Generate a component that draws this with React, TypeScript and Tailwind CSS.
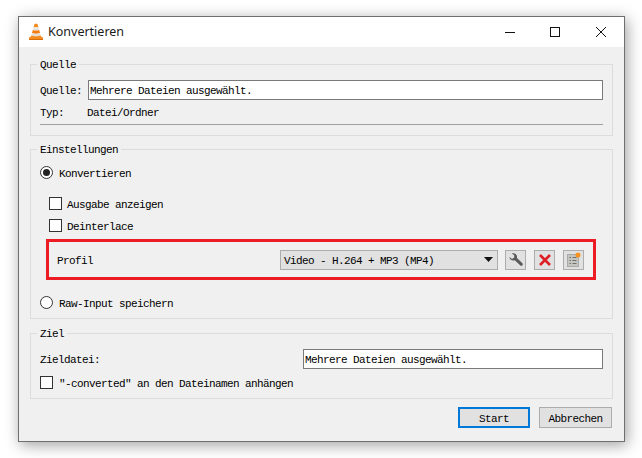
import React from 'react'

const mono = "font-['Liberation_Mono',monospace] text-[11px] leading-[12px] tracking-[-0.6px] text-black"

function VlcCone() {
  return (
    <svg width="16" height="18" viewBox="0 0 16 18" className="shrink-0">
      <path d="M6.4 1.2 C7.2 .6 8.8 .6 9.6 1.2 L10.4 4 L5.6 4 Z" fill="#f58a1f" />
      <path d="M5.5 4 L10.5 4 L11.2 7 C9.5 7.8 6.5 7.8 4.8 7 Z" fill="#e8e4de" />
      <path d="M4.8 7 C6.5 7.8 9.5 7.8 11.2 7 L12 10 C10 11 6 11 4 10 Z" fill="#f47c12" />
      <path d="M4 10 C6 11 10 11 12 10 L12.6 12.4 C10.5 13.4 5.5 13.4 3.4 12.4 Z" fill="#e4dfd8" />
      <path d="M3.4 12.4 C5.5 13.4 10.5 13.4 12.6 12.4 L13 13.6 L15 14.4 L15 17 L1 17 L1 14.4 L3 13.6 Z" fill="#f28a1c" />
      <path d="M1 16 L15 16 L15 17 L1 17 Z" fill="#d96c0a" />
    </svg>
  )
}

function Radio({ checked }: { checked?: boolean }) {
  return (
    <span className="w-[13px] h-[13px] rounded-full border border-[#333] bg-white flex items-center justify-center shrink-0">
      {checked && <span className="w-[7px] h-[7px] rounded-full bg-[#222]" />}
    </span>
  )
}

function Checkbox() {
  return <span className="w-[13px] h-[13px] border border-[#333] bg-white shrink-0" />
}

function IconButton({ children }: { children: React.ReactNode }) {
  return (
    <span className="w-[21px] h-[20px] border border-[#adadad] bg-[#e1e1e1] flex items-center justify-center">
      {children}
    </span>
  )
}

// the dialog font sits a pixel lower than Liberation Mono does
function Label({ className, children }: { className?: string; children: React.ReactNode }) {
  return <span className={`translate-y-px ${className ?? ''}`}>{children}</span>
}

function Group({ title, className, children }: { title: string; className?: string; children: React.ReactNode }) {
  return (
    <fieldset className={`border border-[#dcdcdc] pl-[9px] pr-[9px] ${className ?? ''}`}>
      <legend className="ml-[-3px] px-[3px] h-[12px] translate-y-px">{title}</legend>
      {children}
    </fieldset>
  )
}

export default function App() {
  return (
    <div className="w-[642px] h-[458px] bg-white pl-[18px] pt-[16px] overflow-hidden">
      <div className={`w-[607px] h-[426px] border border-[#6f6f6f] bg-[#f0f0f0] flex flex-col shadow-[2px_3px_14px_rgba(0,0,0,0.38)] ${mono}`}>
        {/* Title bar */}
        <div className="h-[30px] bg-white flex items-center pl-[9px] shrink-0">
          <VlcCone />
          <span className="ml-[4px] font-['Noto_Sans',sans-serif] text-[12.5px] tracking-normal text-[#1a1a1a]">Konvertieren</span>
          <div className="ml-auto flex items-center pr-[18px]">
            <svg width="10" height="10" viewBox="0 0 10 10" className="mr-[35px]"><path d="M0 5.5H10" stroke="#111" /></svg>
            <svg width="10" height="10" viewBox="0 0 10 10" className="mr-[36px]"><rect x=".5" y=".5" width="9" height="9" fill="none" stroke="#111" /></svg>
            <svg width="10" height="10" viewBox="0 0 10 10"><path d="M0 0L10 10M10 0L0 10" stroke="#111" /></svg>
          </div>
        </div>

        <div className="flex-1 px-[11px] pt-[11px] flex flex-col">
          <Group title="Quelle" className="w-[583px] pb-[10px]">
            <div className="flex items-center h-[20px] mt-[10px]">
              <Label className="w-[48px]">Quelle:</Label>
              <div className="w-[515px] h-[20px] bg-white border border-[#7a7a7a] px-[1px] flex items-center">
                <Label>Mehrere Dateien ausgewählt.</Label>
              </div>
            </div>
            <div className="flex mt-[6px]">
              <Label className="w-[47px]">Typ:</Label>
              <Label>Datei/Ordner</Label>
            </div>
            <div className="h-px bg-[#a0a0a0] mt-[6px]" />
          </Group>

          <Group title="Einstellungen" className="w-[583px] h-[176px] mt-[7px]">
            <div className="flex items-center gap-[6px] mt-[11px]">
              <Radio checked />
              <Label>Konvertieren</Label>
            </div>
            <div className="flex items-center gap-[5px] ml-[9px] mt-[18px]">
              <Checkbox />
              <Label>Ausgabe anzeigen</Label>
            </div>
            <div className="flex items-center gap-[5px] ml-[9px] mt-[9px]">
              <Checkbox />
              <Label>Deinterlace</Label>
            </div>
            {/* Profile row */}
            <div className="w-[550px] h-[41px] ml-[6px] mt-[7px] border-[3px] border-[#ed1c24] flex items-center pl-[8px]">
              <Label className="w-[223px]">Profil</Label>
              <div className="w-[218px] h-[20px] border border-[#adadad] bg-[#e1e1e1] flex items-center px-[3px]">
                <Label>Video - H.264 + MP3 (MP4)</Label>
                <svg width="9" height="5" viewBox="0 0 9 5" className="ml-auto mr-[1px]"><path d="M0 0H9L4.5 5Z" fill="#111" /></svg>
              </div>
              <div className="flex gap-[8px] ml-[7px]">
                <IconButton>
                  <svg width="16" height="16" viewBox="0 0 16 16">
                    <path d="M1.5 5 L4 7 L6.2 5.6 L6.2 3.2 L3.8 1.4 C6 .6 8.6 1.6 9 4.2 L9 6 L14.6 11.6 C15.4 12.6 13.6 14.6 12.4 13.6 L6.8 8.2 C4 9 1.4 7.4 1.5 5 Z" fill="#5a5a5a" />
                  </svg>
                </IconButton>
                <IconButton>
                  <svg width="14" height="14" viewBox="0 0 14 14"><path d="M2 2L12 12M12 2L2 12" stroke="#dd1f26" strokeWidth="2.6" /></svg>
                </IconButton>
                <IconButton>
                  <svg width="16" height="16" viewBox="0 0 16 16">
                    <rect x="1.5" y="2.5" width="11" height="12" fill="#c4c4c0" stroke="#a9a9a5" />
                    <path d="M3.5 5.5H5M6.5 5.5H10.5M3.5 8.5H5M6.5 8.5H10.5M3.5 11.5H5M6.5 11.5H10.5" stroke="#6f6f6a" />
                    <circle cx="12" cy="3" r="2.5" fill="#f7931e" />
                  </svg>
                </IconButton>
              </div>
            </div>
            <div className="flex items-center gap-[6px] mt-[16px]">
              <Radio />
              <Label>Raw-Input speichern</Label>
            </div>
          </Group>

          <Group title="Ziel" className="w-[583px] h-[72px] mt-[8px]">
            <div className="flex items-center h-[20px] mt-[10px]">
              <Label className="w-[263px]">Zieldatei:</Label>
              <div className="w-[300px] h-[20px] bg-white border border-[#7a7a7a] px-[1px] flex items-center">
                <Label>Mehrere Dateien ausgewählt.</Label>
              </div>
            </div>
            <div className="flex items-center gap-[6px] mt-[7px]">
              <Checkbox />
              <Label>"-converted" an den Dateinamen anhängen</Label>
            </div>
          </Group>

          <div className="flex justify-end gap-[9px] mt-[8px] w-[582px]">
            <span className="w-[72px] h-[21px] border-2 border-[#0078d7] bg-[#e1e1e1] flex items-center justify-center"><Label>Start</Label></span>
            <span className="w-[73px] h-[21px] border border-[#adadad] bg-[#e1e1e1] flex items-center justify-center"><Label>Abbrechen</Label></span>
          </div>
        </div>
      </div>
    </div>
  )
}
